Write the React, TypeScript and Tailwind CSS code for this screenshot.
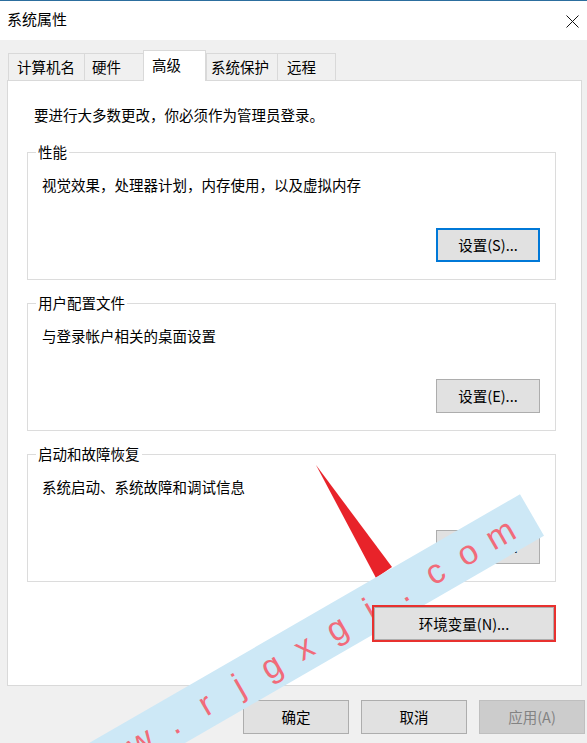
const tabs = [
  { label: '计算机名', w: 'w-[76px]', pl: 'pl-[8px]' },
  { label: '硬件', w: 'w-[59px]', pl: 'pl-[7px]' },
  { label: '高级', w: 'w-[63px]', pl: 'pl-[8px]', active: true },
  { label: '系统保护', w: 'w-[71px]', pl: 'pl-[4px]' },
  { label: '远程', w: 'w-[59px]', pl: 'pl-[9px]', last: true },
]

const groups = [
  { title: '性能', desc: '视觉效果，处理器计划，内存使用，以及虚拟内存', button: '设置(S)...', focused: true },
  { title: '用户配置文件', desc: '与登录帐户相关的桌面设置', button: '设置(E)...' },
  { title: '启动和故障恢复', desc: '系统启动、系统故障和调试信息', button: '设置(T)...' },
]

const watermark = 'www.rjgxgj.com'.split('')

function Group({ title, desc, button, focused }: { title: string; desc: string; button: string; focused?: boolean }) {
  return (
    <fieldset className="w-[529px] border border-[#dcdcdc] p-0 m-0 mt-[13px] first-of-type:mt-[17px]">
      <legend className="ml-[8px] px-[2px] leading-[20px]">{title}</legend>
      <p className="mt-[13px] pl-[14px] leading-[20px]">{desc}</p>
      <div className="mt-[33px] pr-[15px] pb-[17px] flex justify-end">
        <button
          className={
            focused
              ? 'w-[104px] h-[34px] bg-[#e1e1e1] border-2 border-[#0078d7]'
              : 'w-[104px] h-[34px] bg-[#e1e1e1] border border-[#adadad]'
          }
        >
          {button}
        </button>
      </div>
    </fieldset>
  )
}

export default function App() {
  return (
    <div className="relative w-[587px] h-[743px] overflow-hidden bg-[#f0f0f0] text-black text-[14.5px] font-['Noto_Sans_CJK_SC',sans-serif]">
      {/* Title bar */}
      <div className="h-[40px] bg-white border-t border-[#2c6e9e] flex items-center justify-between pl-[7px] pr-[8px]">
        <span className="text-[15px] -mt-[2px]">系统属性</span>
        <svg width="13" height="13" viewBox="0 0 13 13" className="mt-[2px]">
          <path d="M0.5 0.5L12.5 12.5M12.5 0.5L0.5 12.5" stroke="#111" strokeWidth="1" />
        </svg>
      </div>

      <div className="pl-[7px]">
        {/* Tabs */}
        <div className="relative z-10 flex items-end h-[31px] mt-[10px] -mb-px pl-[1px]">
          {tabs.map((t) =>
            t.active ? (
              <div
                key={t.label}
                className={`${t.w} ${t.pl} h-[31px] bg-white border-l border-r border-t border-[#d9d9d9] flex items-center pb-[2px]`}
              >
                {t.label}
              </div>
            ) : (
              <div
                key={t.label}
                className={`${t.w} ${t.pl} h-[27px] mb-px border-l border-t border-[#d9d9d9] ${t.last ? 'border-r' : ''} flex items-center`}
              >
                {t.label}
              </div>
            ),
          )}
        </div>

        {/* Panel */}
        <div className="w-[575px] h-[606px] bg-white border border-[#d9d9d9] pl-[19px] pt-[24px]">
          <p className="ml-[7px] leading-[20px]">要进行大多数更改，你必须作为管理员登录。</p>
          {groups.map((g) => (
            <Group key={g.title} {...g} />
          ))}
          <div className="w-[529px] mt-[23px] flex justify-end">
            <div className="relative z-20 w-[184px] h-[37px] border-2 border-[#e8312f]">
              <button className="w-full h-full bg-[#e1e1e1] border border-[#adadad]">环境变量(N)...</button>
            </div>
          </div>
        </div>
      </div>

      {/* Footer buttons */}
      <div className="mt-[14px] pr-[2px] flex justify-end gap-3">
        <button className="w-[106px] h-[34px] bg-[#e1e1e1] border border-[#adadad]">确定</button>
        <button className="w-[106px] h-[34px] bg-[#e1e1e1] border border-[#adadad]">取消</button>
        <button className="w-[106px] h-[34px] bg-[#cccccc] border border-[#bfbfbf] text-[#838383]">应用(A)</button>
      </div>

      {/* Annotation arrow */}
      <svg className="absolute left-0 top-0 pointer-events-none" width="587" height="743">
        <polygon points="316,465 376,578 392,567" fill="#e8232a" />
      </svg>

      {/* Watermark band */}
      <div className="absolute left-[-268px] top-[491px] w-[800px] h-[48px] origin-right -rotate-30 bg-[#cde8f6] flex items-center justify-end pr-[18px] pointer-events-none">
        {watermark.map((c, i) => (
          <span
            key={i}
            className="w-[37.8px] text-center text-[34px] leading-[48px] text-[#f16b7a] font-['Liberation_Sans',sans-serif]"
          >
            {c}
          </span>
        ))}
      </div>
    </div>
  )
}
